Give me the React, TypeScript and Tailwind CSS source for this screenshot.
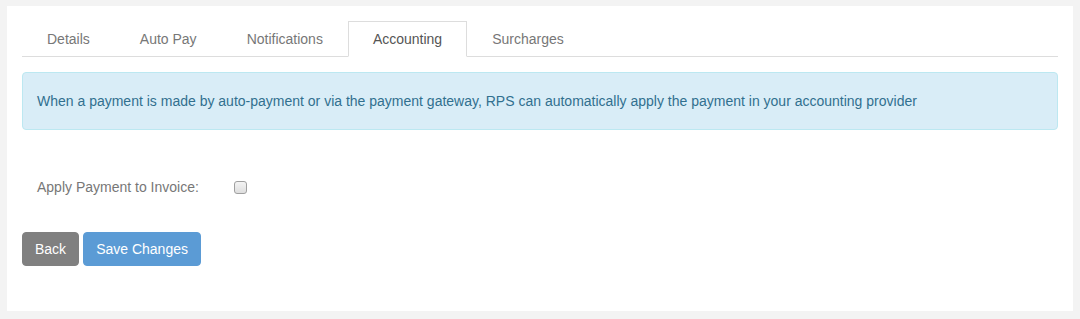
import { useState } from 'react';

const tabs = ['Details', 'Auto Pay', 'Notifications', 'Accounting', 'Surcharges'];

export default function App() {
  const [active, setActive] = useState('Accounting');
  const [apply, setApply] = useState(false);

  return (
    <div className="min-h-[319px] bg-[#f3f3f3] pt-[6px] pl-[7px] pr-[7px] pb-[8px] font-['Liberation_Sans',Arial,sans-serif] text-[14px]">
      <div className="bg-white px-[15px] pt-[15px] pb-[45px]">
        {/* tabs */}
        <ul className="flex border-b border-[#dddddd]">
          {tabs.map((t) => (
            <li key={t} className="-mb-px">
              <button
                onClick={() => setActive(t)}
                className={
                  t === active
                    ? 'block border border-[#dddddd] border-b-white bg-white px-[24px] py-[7px] leading-5 text-[#555555]'
                    : 'block border border-transparent px-[24px] py-[7px] leading-5 text-[#777777]'
                }
              >
                {t}
              </button>
            </li>
          ))}
        </ul>

        <div className="mt-[15px] rounded-[4px] border border-[#bce8f1] bg-[#d9edf7] px-[14px] py-[18px] leading-5 text-[#31708f]">
          When a payment is made by auto-payment or via the payment gateway, RPS can automatically apply the payment in your accounting provider
        </div>

        <div className="mt-[47px] flex items-center">
          <label htmlFor="apply" className="w-[212px] pl-[15px] leading-5 text-[#777777]">
            Apply Payment to Invoice:
          </label>
          <input
            id="apply"
            type="checkbox"
            checked={apply}
            onChange={(e) => setApply(e.target.checked)}
            className="h-[13px] w-[13px] appearance-none rounded-[3px] border border-[#a0a0a0] bg-gradient-to-b from-[#f4f4f4] to-[#dedede] checked:bg-[#5b9bd5]"
          />
        </div>

        <div className="mt-[35px] flex gap-[4px]">
          <button className="rounded-[4px] border border-[#808080] bg-[#808080] px-[12px] py-[6px] leading-5 text-white">
            Back
          </button>
          <button className="rounded-[4px] border border-[#5b9bd5] bg-[#5b9bd5] px-[12px] py-[6px] leading-5 text-white">
            Save Changes
          </button>
        </div>
      </div>
    </div>
  );
}
